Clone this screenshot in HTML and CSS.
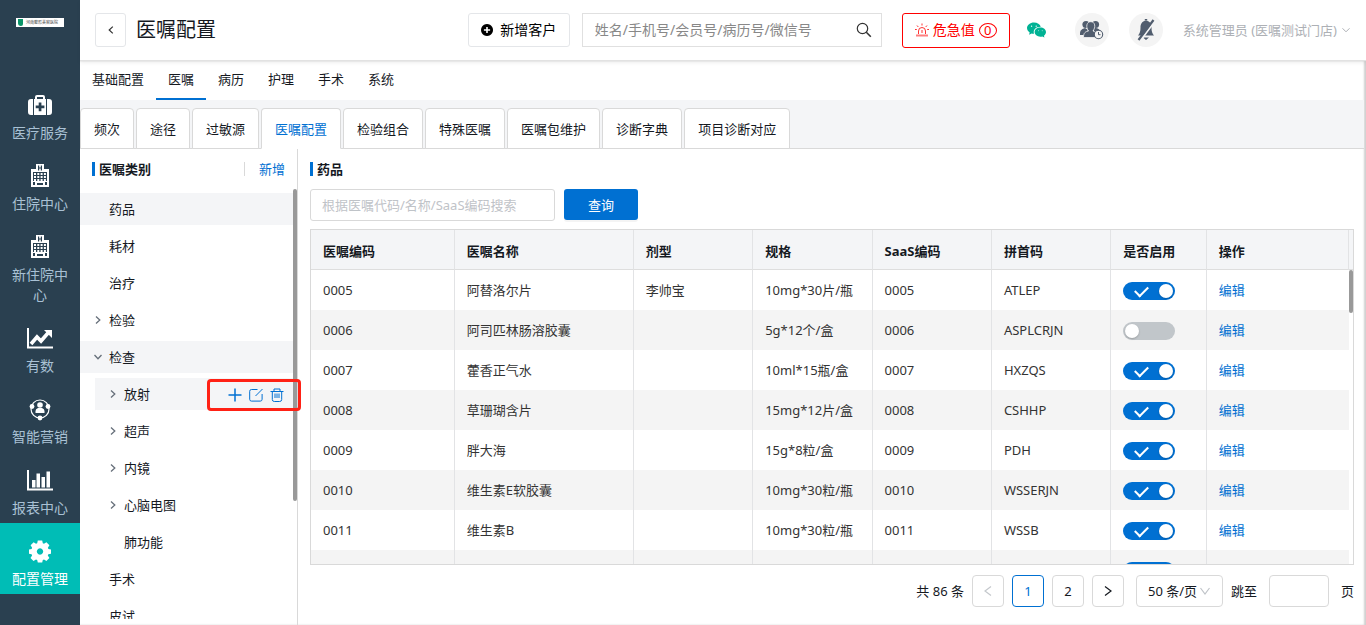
FILE: index.html
```html
<!DOCTYPE html>
<html lang="zh-CN">
<head>
<meta charset="utf-8">
<meta name="viewport" content="width=device-width, initial-scale=1">
<title>医嘱配置</title>
<link rel="stylesheet" href="styles.css">
</head>
<body>
<svg class="defs" aria-hidden="true">
  <symbol id="chev" viewBox="0 0 10 10"><path d="M3 1.5 6.8 5 3 8.5" fill="none" stroke="currentColor" stroke-width="1.3"/></symbol>
  <symbol id="hospital" viewBox="0 0 24 24">
    <path fill="currentColor" fill-rule="evenodd" d="M8 0h8v5h5v18H3V5h5zM10 1.500v5h1.200V4.600h1.600v1.900H14v-5h-1.200v1.900h-1.600V1.500zM5 8v9h14V8zM5 18v3h2v-3zM17 18v3h2v-3zM9 19v2h6v-2z"/>
    <path fill="currentColor" d="M6 9h2v2H6zm3.300 0h2v2h-2zm3.300 0h2v2h-2zm3.300 0h2v2h-2zM6 12h2v2H6zm3.300 0h2v2h-2zm3.300 0h2v2h-2zm3.300 0h2v2h-2zM6 15h2v2H6zm3.300 0h2v2h-2zm3.300 0h2v2h-2zm3.300 0h2v2h-2z"/>
  </symbol>
</svg>
<div class="app">
  <nav class="sidebar" aria-label="主菜单">
    <div class="logo"><i class="logo-mark"></i><span>河南整形美容医院</span></div>
    <a class="side-item" href="#">
      <svg viewBox="0 0 24 24"><path fill="currentColor" fill-rule="evenodd" d="M7 6V4q0-2 2-2h6q2 0 2 2v2h1v16H6V6zm2 0h6V4H9zM10.700 9.500v3h-3v2.800h3v3h2.700v-3h3v-2.800h-3v-3zM5 6v16H3q-3 0-3-3V9q0-3 3-3zM19 6h2q3 0 3 3v10q0 3-3 3h-2z"/></svg>
      <span>医疗服务</span></a>
    <a class="side-item" href="#"><svg viewBox="0 0 24 24"><use href="#hospital"/></svg><span>住院中心</span></a>
    <a class="side-item" href="#"><svg viewBox="0 0 24 24"><use href="#hospital"/></svg><span>新住院中心</span></a>
    <a class="side-item" href="#">
      <svg class="wide" viewBox="0 0 28 24"><path d="M2 2v19.500h25" fill="none" stroke="currentColor" stroke-width="2"/><path d="m5 18 6-7 4 4 7-8" fill="none" stroke="currentColor" stroke-width="3.600"/><path d="M18 4h8v8z" fill="currentColor"/></svg>
      <span>有数</span></a>
    <a class="side-item" href="#">
      <svg viewBox="0 0 24 24"><circle cx="12" cy="12" r="9" fill="none" stroke="currentColor" stroke-width="1.200"/><g fill="currentColor"><circle cx="4" cy="9.500" r="2.400"/><circle cx="20" cy="9.500" r="2.400"/><circle cx="12" cy="21" r="2.400"/><circle cx="12" cy="8" r="2.800"/><path d="M7.500 16v-2q0-2 2.500-3h4q2.500 1 2.500 3v2z"/></g></svg>
      <span>智能营销</span></a>
    <a class="side-item" href="#">
      <svg class="wide" viewBox="0 0 28 24"><path d="M2 2v19.500h25" fill="none" stroke="currentColor" stroke-width="2"/><path fill="currentColor" d="M6 12h3.500v7.500H6zM10.500 5.500H14v14h-3.500zM15.500 9H19v10.500h-3.500zM20.500 3.500H24v16h-3.500z"/></svg>
      <span>报表中心</span></a>
    <a class="side-item on" href="#">
      <svg viewBox="0 0 24 24"><path fill="currentColor" fill-rule="evenodd" d="m9.800 1.500h4.400l.6 2.700 1.200.5 2.400-1.500 3 3-1.500 2.500.5 1.200 2.600.6v4.200l-2.700.6-.5 1.200 1.600 2.400-3 3-2.400-1.500-1.200.5-.6 2.600H9.800l-.6-2.600-1.200-.5-2.500 1.500-3-3 1.600-2.400-.5-1.200L1 14.700v-4.200l2.600-.6.500-1.200-1.500-2.500 3-3L8 4.700l1.200-.5zM12 9.300a3.200 3.200 0 1 0 .01 0z"/></svg>
      <span>配置管理</span></a>
  </nav>

  <div class="main">
    <header class="topbar">
      <button class="back" aria-label="返回"><svg viewBox="0 0 10 10"><path d="M6.500 2.200 3.500 5l3 2.800" fill="none" stroke="currentColor"/></svg></button>
      <h1>医嘱配置</h1>
      <div class="tools">
        <button class="add-customer"><svg viewBox="0 0 12 12"><path fill="currentColor" fill-rule="evenodd" d="M6 0a6 6 0 1 0 .01 0zM5.200 2.900h1.600v2.300h2.300v1.600H6.800v2.300H5.200V6.800H2.900V5.200h2.300z"/></svg>新增客户</button>
        <label class="search"><input type="text" aria-label="搜索客户" placeholder="姓名/手机号/会员号/病历号/微信号"><svg viewBox="0 0 16 16"><circle cx="6.500" cy="6.500" r="5.200" fill="none" stroke="currentColor" stroke-width="1.200"/><path d="m10.300 10.300 4.500 4.500" stroke="currentColor" stroke-width="1.600"/></svg></label>
        <button class="alert"><svg viewBox="0 0 14 14" fill="none" stroke="currentColor"><path d="M3.500 11V8a3.500 3.500 0 0 1 7 0v3M7 7v3M7 .5v2M2 2.500 3.300 4M12 2.500 10.700 4M0 6.500h1.800M12.200 6.500H14" opacity=".8"/><path d="M1 12.500h12" stroke-width="2" opacity=".5"/></svg>危急值<span class="count">0</span></button>
        <a class="wechat" href="#" aria-label="微信"><svg viewBox="0 0 20 16"><g fill="#00b294"><path d="M7.300 0C3.300 0 0 2.600 0 5.900c0 1.900 1.100 3.500 2.800 4.600L2.200 13l2.700-1.400q1.300.3 2.500.2C6 7.500 9.500 4.500 14.500 4.500 13.800 1.900 10.900 0 7.300 0z"/><path d="M14 5.300c-3.300 0-6 2.200-6 4.900s2.700 4.900 6 4.900q1.200 0 2.100-.3l2.300 1.200-.6-2c1.300-.9 2.200-2.200 2.200-3.800 0-2.700-2.700-4.900-6-4.900z"/></g><g fill="#fff"><circle cx="4.800" cy="4" r=".7"/><circle cx="9.700" cy="4" r=".7"/><circle cx="12" cy="8.700" r=".5"/><circle cx="16" cy="8.700" r=".5"/></g></svg></a>
        <button class="round people" aria-label="客户"><svg viewBox="0 0 24 20"><g fill="#515d6e"><circle cx="6" cy="4.500" r="3.600"/><circle cx="15.500" cy="4.500" r="3.600"/><path d="M0 14c0-4 2-5 5-6l3 2-3 5H0zM14 8c5 0 6 2 6 4l-6 1z"/><path stroke="#f4f4f4" stroke-width=".8" d="M3.500 17.500c0-5 2-5.800 5-6.500-3-4-2-9.300 2.300-9.300S16 7 13 11c2 .5 3 1 3.500 2.500v4z"/></g><circle cx="18.500" cy="14.500" r="4.200" fill="#f4f4f4" stroke="#515d6e" stroke-width="1.100"/><path d="M18.500 12v2.700h2" fill="none" stroke="#515d6e"/></svg></button>
        <button class="round bell" aria-label="通知"><svg viewBox="0 0 20 22"><path fill="#515d6e" d="M10 1.500c-4.500.8-5.500 4-5.500 7 0 4-.8 6-2.500 8h16c-1.700-2-2.500-4-2.500-8 0-3-1-6.200-5.500-7zM8.800 0h2.400v2H8.800zM7 18.500h6l-3 2.500z"/><path d="m19 2-15 20" stroke="#f4f4f4" stroke-width="2"/><path d="M17.500 1 2.500 21" stroke="#515d6e" stroke-width="2.200"/></svg></button>
        <button class="user">系统管理员 (医嘱测试门店)<svg viewBox="0 0 10 10"><path d="M1.500 3.300 5 6.800l3.500-3.500" fill="none" stroke="currentColor"/></svg></button>
      </div>
    </header>

    <div class="page">
      <nav class="menu" aria-label="配置分类">
        <a href="#">基础配置</a><a class="on" href="#">医嘱</a><a href="#">病历</a><a href="#">护理</a><a href="#">手术</a><a href="#">系统</a>
      </nav>
      <nav class="tabs" aria-label="医嘱分类">
        <a href="#">频次</a><a href="#">途径</a><a href="#">过敏源</a><a class="on" href="#">医嘱配置</a><a href="#">检验组合</a><a href="#">特殊医嘱</a><a href="#">医嘱包维护</a><a href="#">诊断字典</a><a href="#">项目诊断对应</a>
      </nav>
      <div class="body">
        <aside class="side">
          <div class="side-head"><h2>医嘱类别</h2><a href="#">新增</a></div>
          <div class="tree-wrap">
            <ul class="tree">
              <li class="node hl">药品</li>
              <li class="node">耗材</li>
              <li class="node">治疗</li>
              <li class="node"><svg class="arrow"><use href="#chev"/></svg>检验</li>
              <li class="node hl"><svg class="arrow open"><use href="#chev"/></svg>检查</li>
              <li>
                <ul class="sub">
                  <li class="node hl"><svg class="arrow"><use href="#chev"/></svg>放射
                    <span class="ops">
                      <button aria-label="新增"><svg viewBox="0 0 14 14"><path d="M7 .5v13M.5 7h13" stroke-width="1.500"/></svg></button>
                      <button aria-label="编辑"><svg viewBox="0 0 14 14"><path d="M8.500 1.500h-6Q.7 1.500.7 3.300v8q0 1.800 1.800 1.800h8.800q1.800 0 1.800-1.800V6M6.500 8l7-7"/></svg></button>
                      <button aria-label="删除"><svg viewBox="0 0 14 14"><path d="M.5 3.500h13M4 3.500V1h6v2.500M2.300 3.500v8q0 2 2 2h5.400q2 0 2-2v-8M5 5.500v4.500M7 5.500v4.500M9 5.500v4.500"/></svg></button>
                    </span>
                  </li>
                  <li class="node"><svg class="arrow"><use href="#chev"/></svg>超声</li>
                  <li class="node"><svg class="arrow"><use href="#chev"/></svg>内镜</li>
                  <li class="node"><svg class="arrow"><use href="#chev"/></svg>心脑电图</li>
                  <li class="node">肺功能</li>
                </ul>
              </li>
              <li class="node">手术</li>
              <li class="node">皮试</li>
            </ul>
            <div class="thumb tree-thumb"></div>
          </div>
        </aside>

        <section class="content">
          <h2>药品</h2>
          <form class="query">
            <input type="text" aria-label="医嘱搜索" placeholder="根据医嘱代码/名称/SaaS编码搜索">
            <button type="button">查询</button>
          </form>
          <div class="grid">
            <table>
              <colgroup><col class="c-code"><col class="c-name"><col class="c-mid"><col class="c-mid"><col class="c-mid"><col class="c-mid"><col class="c-switch"><col class="c-op"></colgroup>
              <thead><tr><th>医嘱编码</th><th>医嘱名称</th><th>剂型</th><th>规格</th><th>SaaS编码</th><th>拼首码</th><th>是否启用</th><th>操作</th></tr></thead>
              <tbody>
                <tr><td>0005</td><td>阿替洛尔片</td><td>李帅宝</td><td>10mg*30片/瓶</td><td>0005</td><td>ATLEP</td><td><input class="switch" type="checkbox" aria-label="启用 0005" checked></td><td><a href="#">编辑</a></td></tr>
                <tr><td>0006</td><td>阿司匹林肠溶胶囊</td><td></td><td>5g*12个/盒</td><td>0006</td><td>ASPLCRJN</td><td><input class="switch" type="checkbox" aria-label="启用 0006"></td><td><a href="#">编辑</a></td></tr>
                <tr><td>0007</td><td>藿香正气水</td><td></td><td>10ml*15瓶/盒</td><td>0007</td><td>HXZQS</td><td><input class="switch" type="checkbox" aria-label="启用 0007" checked></td><td><a href="#">编辑</a></td></tr>
                <tr><td>0008</td><td>草珊瑚含片</td><td></td><td>15mg*12片/盒</td><td>0008</td><td>CSHHP</td><td><input class="switch" type="checkbox" aria-label="启用 0008" checked></td><td><a href="#">编辑</a></td></tr>
                <tr><td>0009</td><td>胖大海</td><td></td><td>15g*8粒/盒</td><td>0009</td><td>PDH</td><td><input class="switch" type="checkbox" aria-label="启用 0009" checked></td><td><a href="#">编辑</a></td></tr>
                <tr><td>0010</td><td>维生素E软胶囊</td><td></td><td>10mg*30粒/瓶</td><td>0010</td><td>WSSERJN</td><td><input class="switch" type="checkbox" aria-label="启用 0010" checked></td><td><a href="#">编辑</a></td></tr>
                <tr><td>0011</td><td>维生素B</td><td></td><td>10mg*30粒/瓶</td><td>0011</td><td>WSSB</td><td><input class="switch" type="checkbox" aria-label="启用 0011" checked></td><td><a href="#">编辑</a></td></tr>
                <tr><td></td><td></td><td></td><td></td><td></td><td></td><td><input class="switch" type="checkbox" aria-label="启用" checked></td><td></td></tr>
              </tbody>
            </table>
            <div class="gutter"><div class="gutter-head"></div><div class="thumb grid-thumb"></div></div>
          </div>
          <div class="pager">
            <span class="total">共 86 条</span>
            <button class="pg off" aria-label="上一页" disabled><svg viewBox="0 0 12 12"><path d="M9 1.500 3 6l6 4.500"/></svg></button>
            <button class="pg on">1</button>
            <button class="pg">2</button>
            <button class="pg" aria-label="下一页"><svg viewBox="0 0 12 12"><path d="m3 1.500 6 4.500-6 4.500"/></svg></button>
            <span class="size"><select aria-label="每页条数"><option>50 条/页</option></select><svg viewBox="0 0 12 12"><path d="m1.500 3 4.500 6 4.500-6"/></svg></span>
            <label class="jump">跳至<input type="text"><span>页</span></label>
          </div>
        </section>
      </div>
    </div>
  </div>
</div>
</body>
</html>
```
FILE: styles.css
```css
* { box-sizing: border-box; }
html, body { height: 100%; margin: 0; }
body {
  font: 13px/20px "Noto Sans", "Noto Sans CJK SC", sans-serif;
  color: #15191f;
  background: #fff;
}
button, input, select { font: inherit; color: inherit; }
button { padding: 0; background: none; border: 0; cursor: pointer; }
a { color: #0070d2; text-decoration: none; }
h1, h2, ul { margin: 0; padding: 0; list-style: none; }
svg { display: block; flex: none; }
.defs { position: absolute; width: 0; height: 0; }

.app { display: flex; height: 100vh; overflow: hidden; }

/* Sidebar */
.sidebar { width: 80px; flex: none; background: #2a4050; overflow: hidden; }
.logo {
  display: flex; align-items: center; gap: 3px;
  height: 9px; margin: 18px 16px 50px; padding: 0 2px;
  background: #fff; color: #444; font-size: 4px; line-height: 8px; white-space: nowrap; overflow: hidden;
}
.logo-mark { width: 5px; height: 7px; background: #0a9468; border-radius: 0 0 2px 3px; flex: none; }
.side-item {
  display: flex; flex-direction: column; align-items: center; gap: 6px;
  padding: 16px 10px 5px; color: #a9c1d4; font-size: 14px; text-align: center;
}
.side-item svg { width: 24px; height: 24px; color: #fff; }
.side-item svg.wide { width: 28px; }
.side-item.on { background: #00bdb6; color: #fff; }

/* Top bar */
.main { flex: 1; min-width: 0; display: flex; flex-direction: column; }
.topbar {
  display: flex; align-items: center; flex: none; height: 61px; padding: 0 15px;
  border-bottom: 1px solid #e2e2e2; box-shadow: 0 2px 4px #0000000f; z-index: 1;
}
.back {
  display: grid; place-items: center; width: 31px; height: 34px; margin-right: 10px;
  border: 1px solid #e4e6e9; border-radius: 3px; color: #333;
}
.back svg { width: 12px; height: 12px; }
h1 { font-size: 20px; line-height: 28px; font-weight: 400; }
.tools { display: flex; align-items: center; margin-left: auto; font-size: 14px; }
.add-customer {
  display: flex; align-items: center; justify-content: center; gap: 7px;
  width: 102px; height: 34px; margin-right: 12px;
  border: 1px solid #e4e6e9; border-radius: 3px; color: #000;
}
.add-customer svg { width: 12px; height: 12px; }
.search {
  display: flex; align-items: center; width: 300px; height: 34px; margin-right: 20px; padding: 0 9px 0 12px;
  border: 1px solid #e0e0e0;
}
.search input { flex: 1; min-width: 0; padding: 0; border: 0; outline: 0; background: none; }
.search input::placeholder { color: #888; }
.search svg { width: 16px; height: 16px; color: #333; }
.alert {
  display: flex; align-items: center; justify-content: center; gap: 4px;
  width: 108px; height: 35px; margin-right: 17px;
  border: 1px solid #f00; border-radius: 3px; color: #f00;
}
.alert svg { width: 14px; height: 14px; }
.count { width: 18px; height: 15px; border: 1px solid; border-radius: 50%; line-height: 13px; font-size: 13px; }
.wechat { margin-right: 29px; }
.wechat svg { width: 19px; height: 16px; }
.round { display: grid; place-items: center; width: 34px; height: 34px; border-radius: 50%; background: #f4f4f4; margin-right: 20px; }
.people svg { width: 24px; height: 20px; }
.bell svg { width: 20px; height: 22px; }
.user { display: flex; align-items: center; gap: 4px; color: #adb0b5; font-size: 13px; }
.user svg { width: 10px; height: 10px; }

/* Page navigation */
.page { flex: 1; min-height: 0; display: flex; flex-direction: column; box-shadow: inset -2px 0 2px #00000030; }
.menu { display: flex; flex: none; height: 39px; }
.menu a { padding: 8px 12px 0; color: #15191f; }
.menu .on { border-bottom: 2px solid #0070d2; }
.tabs {
  display: flex; gap: 2px; flex: none; height: 49px; padding-top: 8px; margin-right: 2px;
  background: #f4f5f7; border-bottom: 1px solid #d9d9d9;
}
.tabs a {
  height: 41px; padding: 10px 13px; color: #15191f; background: #fff;
  border: 1px solid #d9d9d9; border-radius: 4px 4px 0 0;
}
.tabs .on { color: #0070d2; border-bottom-color: #fff; }
.body { flex: 1; min-height: 0; display: flex; }

/* Category tree */
.side { display: flex; flex-direction: column; width: 218px; flex: none; border-right: 1px solid #d9d9d9; }
h2 {
  display: flex; align-items: center; gap: 4px; font-size: 13px; line-height: 20px; font-weight: 700;
}
h2::before { content: ""; width: 3px; height: 14px; background: #0070d2; }
.side-head { display: flex; align-items: center; justify-content: space-between; padding: 10px 12px; }
.side-head a { padding-left: 14px; line-height: 14px; border-left: 1px solid #d9d9d9; }
.tree-wrap { display: flex; flex: 1; min-height: 0; margin-bottom: 6px; overflow-x: visible; overflow-y: clip; }
.tree { flex: 1; padding-top: 4px; }
.node { display: flex; align-items: center; position: relative; height: 32px; margin-bottom: 5px; padding-left: 29px; }
.sub { padding-left: 15px; }
.hl { background: #f4f5f7; }
.arrow { width: 10px; height: 10px; margin: 0 6px 0 -16px; color: #666f7a; }
.arrow.open { transform: rotate(90deg); }
.thumb { width: 4px; border-radius: 2px; background: #999; }
.tree-thumb { height: 312px; }
.ops {
  position: absolute; top: 1px; right: -8px; z-index: 1;
  display: flex; align-items: center; justify-content: flex-end; gap: 7px;
  width: 94px; height: 32px; padding-right: 14px;
  border: 3px solid #ff2115; border-radius: 4px;
}
.ops svg { width: 14px; height: 14px; fill: none; stroke: #0070d2; }

/* Order list */
.content { flex: 1; min-width: 0; display: flex; flex-direction: column; padding: 10px 12px 0; }
.query { display: flex; gap: 9px; margin: 10px 0 8px; }
.query input {
  width: 245px; height: 32px; padding: 0 11px; border: 1px solid #d9d9d9; border-radius: 3px; outline: 0;
}
.query input::placeholder { color: #bfc3c8; }
.query button { width: 74px; height: 31px; border-radius: 3px; background: #0070d2; color: #fff; box-shadow: 0 2px 0 #0000000b; }
.grid { flex: 1; min-height: 0; display: flex; overflow: hidden; border: 1px solid #d9d9d9; }
table { flex: 1; width: 100%; height: 0; table-layout: fixed; border-collapse: separate; border-spacing: 0; }
.c-code { width: 13.85%; }
.c-name { width: 17.25%; }
.c-mid { width: 11.5%; }
.c-switch { width: 9.2%; }
.c-op { width: 13.7%; }
th, td { height: 40px; padding: 0 12px; text-align: left; border-right: 1px solid #e2e3e5; white-space: nowrap; }
th { background: #f4f5f7; font-weight: 700; padding-top: 3px; border-bottom: 1px solid #dedede; }
td { color: #333; }
td:last-child { border-right: 0; }
tbody tr:nth-child(even) { background: #f4f4f4; }
.switch {
  appearance: none; display: block; position: relative; width: 52px; height: 18px; margin: 2px 0 0;
  border-radius: 9px; background: #c1c6ca;
}
.switch::before {
  content: ""; position: absolute; top: 2px; left: 2px; width: 14px; height: 14px; border-radius: 50%;
  background: #fff; box-shadow: 0 1px 2px #0003;
}
.switch:checked { background: #0070d2; }
.switch:checked::before { left: 36px; }
.switch:checked::after {
  content: ""; position: absolute; left: 12px; top: 4px; width: 11px; height: 6px;
  border: solid #fff; border-width: 0 0 2px 2px; transform: rotate(-45deg);
}
.gutter { width: 4px; flex: none; }
.gutter-head { height: 40px; background: #f4f5f7; border-bottom: 1px solid #dedede; }
.grid-thumb { height: 43px; }

/* Pagination */
.pager { display: flex; align-items: center; justify-content: flex-end; gap: 8px; flex: none; height: 60px; padding-bottom: 8px; }
.pg {
  display: grid; place-items: center; width: 32px; height: 32px;
  border: 1px solid #d9d9d9; border-radius: 4px;
}
.pg svg, .size svg { width: 12px; height: 12px; fill: none; stroke: currentColor; stroke-width: 1.200; }
.pg.on { border-color: #0070d2; color: #0070d2; }
.pg.off { color: #c4c8cc; }
.size {
  display: flex; align-items: center; width: 87px; height: 32px; margin-left: 4px; padding-left: 11px;
  border: 1px solid #d9d9d9; border-radius: 4px;
}
.size select { appearance: none; width: 51px; padding: 0; border: 0; outline: 0; background: none; }
.size svg { color: #bfc3c8; }
.jump { display: flex; align-items: center; gap: 12px; }
.jump input { width: 60px; height: 32px; padding: 0 8px; border: 1px solid #d9d9d9; border-radius: 4px; }
```
